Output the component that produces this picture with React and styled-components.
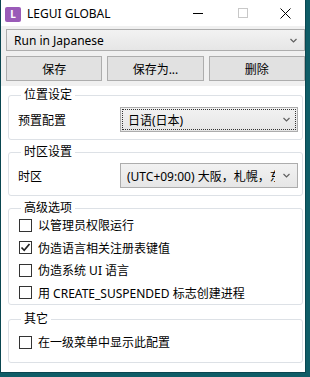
import React from 'react'
import styled, { createGlobalStyle } from 'styled-components'

const GlobalStyle = createGlobalStyle`
  html, body {
    margin: 0;
    padding: 0;
    background: #0f5d67;
  }

  body {
    font-family: "Noto Sans", "Noto Sans CJK SC", sans-serif;
    font-size: 12px;
    color: #000;
  }
`

const Window = styled.div`
  width: 306px;
  height: 373px;
  box-sizing: border-box;
  background: #fff;
  border: 1px solid #0a4650;
  border-top: none;
  display: flex;
  flex-direction: column;
`

const TitleBar = styled.div`
  height: 26px;
  display: flex;
  align-items: center;
  padding-left: 4px;
  padding-right: 0;
  flex-shrink: 0;
`

const AppIcon = styled.div`
  width: 16px;
  height: 15px;
  border-radius: 2px;
  background: #9a5bb8;
  color: #fff;
  font-size: 10px;
  font-weight: bold;
  display: flex;
  align-items: center;
  justify-content: center;
  margin-top: 2px;
`

const TitleText = styled.div`
  margin-left: 6px;
  font-size: 12px;
  flex: 1;
  padding-top: 1px;
`

const CaptionButton = styled.div`
  width: ${(p) => p.$w || 45}px;
  height: 26px;
  display: flex;
  align-items: center;
  justify-content: center;
`

const TopPanel = styled.div`
  background: #f0f0f0;
  padding: 3px 0 5px 5px;
  display: flex;
  flex-direction: column;
  gap: 5px;
`

const Combo = styled.div`
  height: ${(p) => p.$h || 22}px;
  box-sizing: border-box;
  border: 1px solid #adadad;
  background: linear-gradient(#f2f2f2, #e6e6e6);
  display: flex;
  align-items: center;
  position: relative;
  padding: 0 0 0 ${(p) => p.$pl || 6}px;
  font-size: 12px;
  overflow: hidden;
`

const FocusRect = styled.div`
  position: absolute;
  inset: 1px;
  border: 1px dotted #333;
  pointer-events: none;
`

const ComboText = styled.div`
  flex: 1;
  white-space: nowrap;
  overflow: hidden;
`

const Arrow = styled.div`
  width: 22px;
  display: flex;
  justify-content: center;
  align-items: center;
  flex-shrink: 0;
`

const ButtonRow = styled.div`
  display: grid;
  grid-template-columns: 1fr 1fr 1fr;
  gap: 5px;
`

const Button = styled.div`
  height: 25px;
  box-sizing: border-box;
  border: 1px solid #adadad;
  background: #e1e1e1;
  display: flex;
  align-items: center;
  justify-content: center;
  font-size: 12px;
`

const Content = styled.div`
  padding: 3px 2px 0 7px;
  display: flex;
  flex-direction: column;
`

const Group = styled.fieldset`
  margin: ${(p) => p.$mt || 0}px 0 0 0;
  border: 1px solid #dde1e6;
  border-radius: 3px;
  padding: ${(p) => p.$pt || 0}px 4px ${(p) => p.$pb || 0}px 8px;
  min-width: 0;
`

const Legend = styled.legend`
  font-size: 12px;
  line-height: 12px;
  height: 12px;
  padding: 0 3px;
  margin-left: 4px;
`

const FieldRow = styled.div`
  display: grid;
  grid-template-columns: 103px 1fr;
  align-items: center;
`

const Label = styled.div`
  padding-left: 1px;
  font-size: 12px;
`

const CheckRow = styled.div`
  height: 22.5px;
  display: flex;
  align-items: center;
  gap: 6px;
  padding-left: 2px;
  font-size: 12px;
`

const Box = styled.div`
  width: 13px;
  height: 13px;
  box-sizing: border-box;
  border: 1px solid #333;
  background: #fff;
  display: flex;
  align-items: center;
  justify-content: center;
  flex-shrink: 0;
`

function Chevron() {
  return (
    <svg width="7" height="5" viewBox="0 0 7 5">
      <path d="M0.5 1 L3.5 4 L6.5 1" fill="none" stroke="#606060" strokeWidth="1.2" />
    </svg>
  )
}

function Check({ checked, children }) {
  return (
    <CheckRow>
      <Box>
        {checked && (
          <svg width="11" height="11" viewBox="0 0 11 11">
            <path d="M1.5 5.5 L4.2 8.3 L9.5 2" fill="none" stroke="#222" strokeWidth="1.7" />
          </svg>
        )}
      </Box>
      <span>{children}</span>
    </CheckRow>
  )
}

export default function App() {
  return (
    <>
      <GlobalStyle />
      <Window>
        <TitleBar>
          <AppIcon>L</AppIcon>
          <TitleText>LEGUI GLOBAL</TitleText>
          <CaptionButton>
            <svg width="10" height="10" viewBox="0 0 10 10">
              <path d="M0 5.5 H10" stroke="#000" strokeWidth="1" />
            </svg>
          </CaptionButton>
          <CaptionButton>
            <svg width="10" height="10" viewBox="0 0 10 10">
              <rect x="0.5" y="0.5" width="9" height="9" fill="none" stroke="#c8c8c8" />
            </svg>
          </CaptionButton>
          <CaptionButton $w={40}>
            <svg width="11" height="11" viewBox="0 0 11 11">
              <path d="M0.5 0.5 L10.5 10.5 M10.5 0.5 L0.5 10.5" stroke="#000" strokeWidth="1" />
            </svg>
          </CaptionButton>
        </TitleBar>

        <TopPanel>
          <Combo $pl={7}>
            <ComboText>Run in Japanese</ComboText>
            <Arrow><Chevron /></Arrow>
          </Combo>
          <ButtonRow>
            <Button>保存</Button>
            <Button>保存为...</Button>
            <Button>删除</Button>
          </ButtonRow>
        </TopPanel>

        <Content>
          <Group $pt={6} $pb={7}>
            <Legend>位置设定</Legend>
            <FieldRow>
              <Label>预置配置</Label>
              <Combo $h={25} $pl={7}>
                <FocusRect />
                <ComboText>日语(日本)</ComboText>
                <Arrow><Chevron /></Arrow>
              </Combo>
            </FieldRow>
          </Group>

          <Group $mt={6} $pt={5} $pb={7}>
            <Legend>时区设置</Legend>
            <FieldRow>
              <Label>时区</Label>
              <Combo $h={25} $pl={6}>
                <ComboText>(UTC+09:00) 大阪，札幌，东京</ComboText>
                <Arrow><Chevron /></Arrow>
              </Combo>
            </FieldRow>
          </Group>

          <Group $mt={6} $pt={0} $pb={0}>
            <Legend>高级选项</Legend>
            <Check>以管理员权限运行</Check>
            <Check checked>伪造语言相关注册表键值</Check>
            <Check>伪造系统 UI 语言</Check>
            <Check>用 CREATE_SUSPENDED 标志创建进程</Check>
          </Group>

          <Group $mt={8} $pt={6} $pb={8}>
            <Legend>其它</Legend>
            <Check>在一级菜单中显示此配置</Check>
          </Group>
        </Content>
      </Window>
    </>
  )
}
